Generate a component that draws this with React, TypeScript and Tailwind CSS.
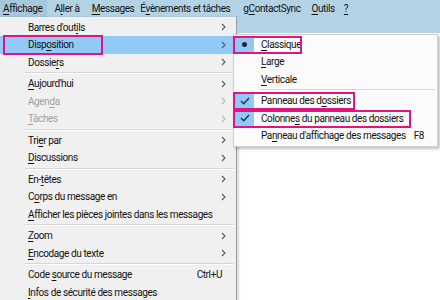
import React from "react";

type Item =
  | { sep: true }
  | {
      sep?: false;
      label: string;
      at: number;
      sub?: boolean;
      disabled?: boolean;
      shortcut?: string;
      active?: boolean;
      box?: number;
    };

const mainItems: Item[] = [
  { label: "Barres d'outils", at: 12, sub: true },
  { label: "Disposition", at: 4, sub: true, active: true, box: 100 },
  { label: "Dossiers", at: 6, sub: true },
  { sep: true },
  { label: "Aujourd'hui", at: 0, sub: true },
  { label: "Agenda", at: 4, sub: true, disabled: true },
  { label: "Tâches", at: 0, sub: true, disabled: true },
  { sep: true },
  { label: "Trier par", at: 3, sub: true },
  { label: "Discussions", at: 0, sub: true },
  { sep: true },
  { label: "En-têtes", at: 3, sub: true },
  { label: "Corps du message en", at: 1, sub: true },
  { label: "Afficher les pièces jointes dans les messages", at: 0 },
  { sep: true },
  { label: "Zoom", at: 0, sub: true },
  { label: "Encodage du texte", at: 0, sub: true },
  { sep: true },
  { label: "Code source du message", at: 5, shortcut: "Ctrl+U" },
  { label: "Infos de sécurité des messages", at: 0 },
];

type SubItem =
  | { sep: true }
  | { sep?: false; label: string; at: number; mark?: "dot" | "check"; box?: number; shortcut?: string };

const subItems: SubItem[] = [
  { label: "Classique", at: 0, mark: "dot", box: 69 },
  { label: "Large", at: 0 },
  { label: "Verticale", at: 0 },
  { sep: true },
  { label: "Panneau des dossiers", at: 13, mark: "check", box: 122 },
  { label: "Colonnes du panneau des dossiers", at: 7, mark: "check", box: 178 },
  { label: "Panneau d'affichage des messages", at: 2, shortcut: "F8" },
];

const menuBar = [
  { label: "Affichage", at: 0, gap: "mr-[6px]" },
  { label: "Aller à", at: 1, gap: "mr-[10px]" },
  { label: "Messages", at: 0, gap: "mr-[4px]" },
  { label: "Évènements et tâches", at: 1, gap: "mr-[11px]" },
  { label: "gContactSync", at: 1, gap: "mr-[9px]" },
  { label: "Outils", at: 0, gap: "mr-[7px]" },
  { label: "?", at: 0, gap: "" },
];

function Acc({ text, at }: { text: string; at: number }) {
  return (
    <span className="whitespace-nowrap">
      {text.slice(0, at)}
      <span className="underline underline-offset-[2px] decoration-[1px]">{text[at]}</span>
      {text.slice(at + 1)}
    </span>
  );
}

function Chevron({ disabled }: { disabled?: boolean }) {
  return (
    <svg width="5" height="8" viewBox="0 0 5 8" className="shrink-0">
      <path d="M1 1 L4 4 L1 7" fill="none" stroke={disabled ? "#b5b5b5" : "#5a5a5a"} strokeWidth="1.1" />
    </svg>
  );
}

function Separator({ indent }: { indent: string }) {
  return (
    <div className={`h-[4px] flex flex-col justify-center ${indent} mr-[2px]`}>
      <div className="border-t border-[#d7d7d7]" />
      <div className="border-t border-white" />
    </div>
  );
}

export default function App() {
  return (
    <div
      className="relative w-[440px] h-[300px] overflow-hidden bg-white text-[#111] text-[10px] tracking-[-0.4px]"
      style={{ fontFamily: 'Roboto, "Noto Sans", sans-serif' }}
    >
      {/* menu bar */}
      <div className="h-[17px] flex items-center bg-[#b3d3e4]">
        {menuBar.map((m, i) => (
          <div
            key={m.label}
            className={`h-full flex items-center ${i === 0 ? "bg-[#a6c8db] pl-[3px] pr-[5px]" : "px-[1px]"} ${m.gap}`}
          >
            <Acc text={m.label} at={m.at} />
          </div>
        ))}
      </div>

      <div className="flex">
        {/* main dropdown */}
        <div className="w-[237px] h-[283px] bg-[#f0f0f0] border-r border-[#9a9a9a] pt-[1.5px] shadow-[2px_0_2px_rgba(0,0,0,0.15)]">
          {mainItems.map((it, i) =>
            it.sep ? (
              <Separator key={i} indent="ml-[25px]" />
            ) : (
              <div
                key={i}
                className={`relative h-[17.5px] flex items-center pl-[28px] pr-[7px] mr-[3px] ${
                  it.active ? "bg-[#91c9f7]" : ""
                } ${it.disabled ? "text-[#a0a0a0]" : ""}`}
              >
                <span className="flex-1">
                  <Acc text={it.label} at={it.at} />
                </span>
                {it.shortcut && <span className="mr-[4px]">{it.shortcut}</span>}
                {it.sub && <Chevron disabled={it.disabled} />}
                {it.box && (
                  <div
                    className="absolute top-[-1px] left-[3px] h-[20px] border-2 border-[#e3147f]"
                    style={{ width: it.box }}
                  />
                )}
              </div>
            )
          )}
        </div>

        {/* application behind */}
        <div className="flex-1">
          <div className="h-[16px] bg-[#b3d3e4]" />
        </div>
      </div>

      {/* submenu */}
      <div className="absolute left-[233px] top-[34px] w-[205px] bg-[#fbfbfb] border border-[#cfcfcf] pt-[0.5px] pb-[1px] shadow-[2px_2px_3px_rgba(0,0,0,0.25)]">
        {subItems.map((it, i) =>
          it.sep ? (
            <Separator key={i} indent="ml-[25px]" />
          ) : (
            <div key={i} className="relative h-[17.5px] flex items-center pr-[14px]">
              <div className="shrink-0 w-[19px] h-[16px] ml-[1px] mr-[7px] flex items-center justify-center">
                {it.mark && (
                  <div className="w-full h-full bg-[#90c8f6] flex items-center justify-center">
                    {it.mark === "dot" ? (
                      <div className="w-[5px] h-[5px] rounded-full bg-[#1e2a3a]" />
                    ) : (
                      <svg width="10" height="8" viewBox="0 0 10 8">
                        <path d="M1 4 L3.8 6.8 L9 1" fill="none" stroke="#1e3350" strokeWidth="1.4" />
                      </svg>
                    )}
                  </div>
                )}
              </div>
              <span className="flex-1">
                <Acc text={it.label} at={it.at} />
              </span>
              {it.shortcut && <span className="ml-[8px]">{it.shortcut}</span>}
              {it.box && (
                <div
                  className="absolute top-[0px] left-[-1px] h-[18px] border-2 border-[#e3147f]"
                  style={{ width: it.box }}
                />
              )}
            </div>
          )
        )}
      </div>
    </div>
  );
}
